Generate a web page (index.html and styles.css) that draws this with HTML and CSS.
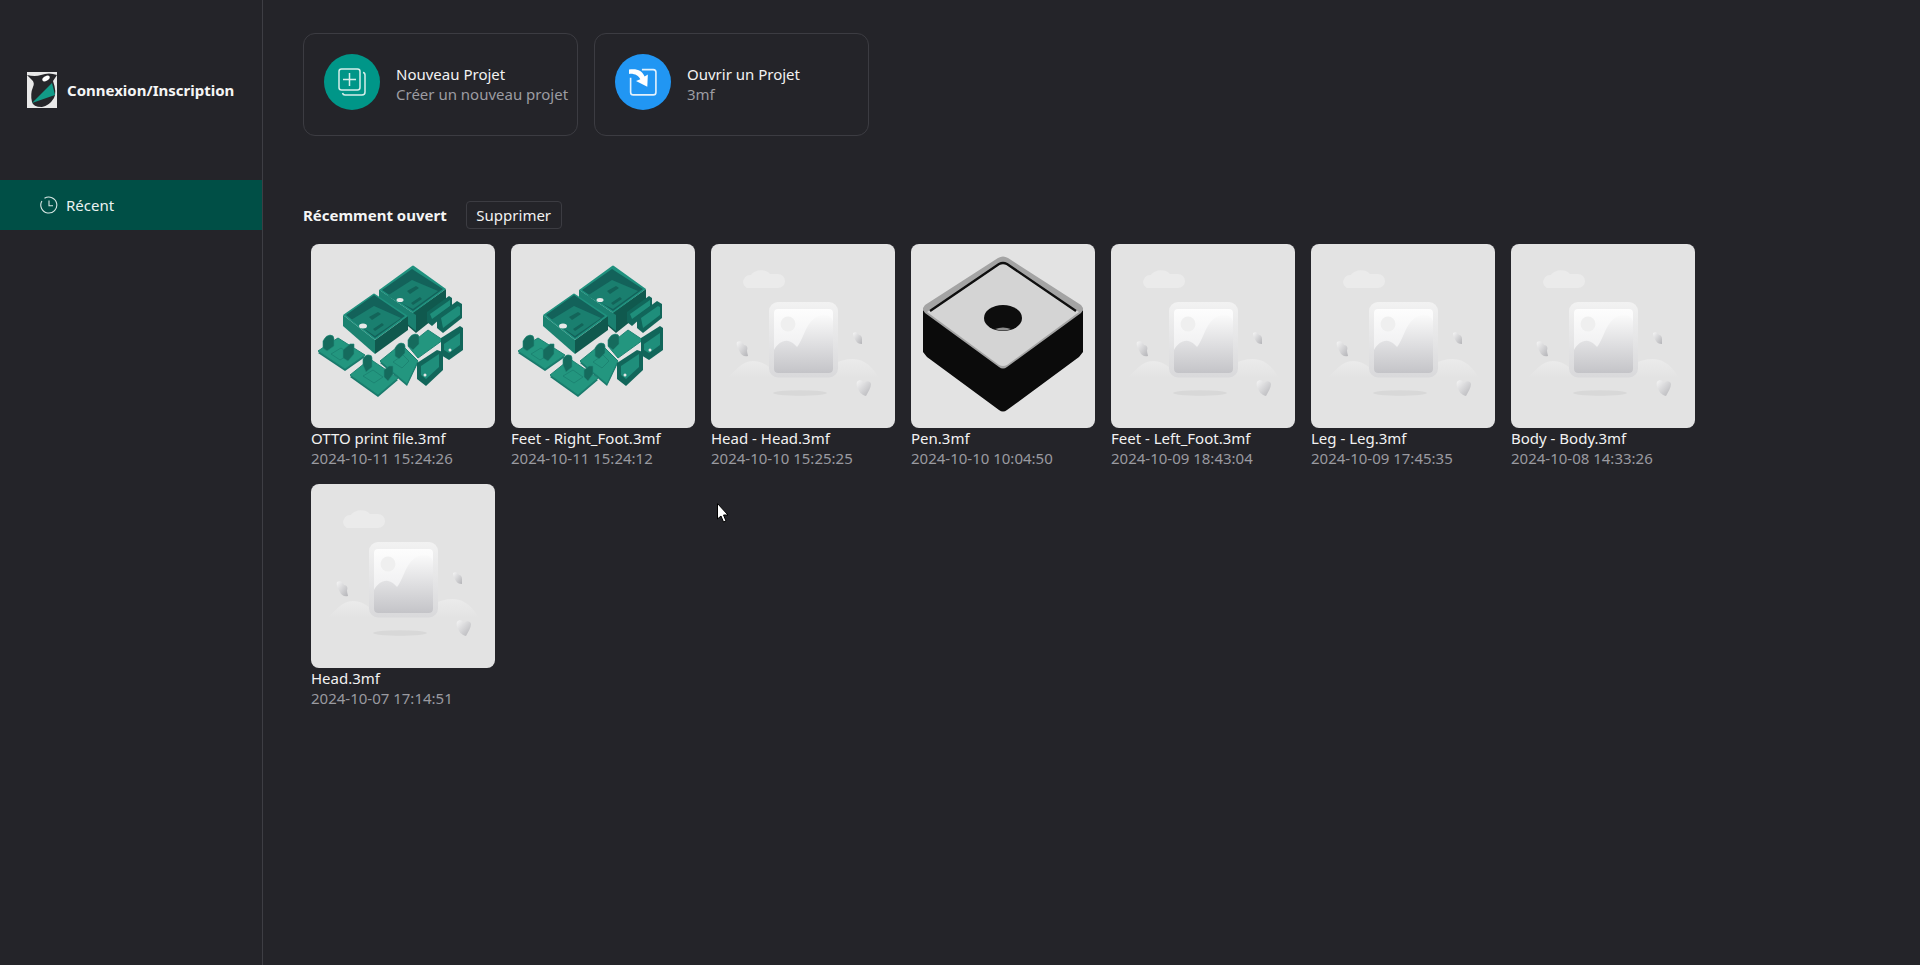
FILE: index.html
```html
<!DOCTYPE html>
<html lang="fr">
<head>
<meta charset="UTF-8" />
<title>Accueil</title>
<link rel="stylesheet" href="styles.css">
</head>
<body>
<svg class="defs" width="0" height="0">
  <defs>
    <linearGradient id="frame-grad" x1="0" y1="0" x2="0" y2="1">
      <stop offset="0" stop-color="#f2f2f2"/>
      <stop offset="1" stop-color="#d9d9db"/>
    </linearGradient>
    <linearGradient id="photo-grad" x1="0" y1="0" x2="0" y2="1">
      <stop offset="0" stop-color="#fdfdfd"/>
      <stop offset="1" stop-color="#e8e8ea"/>
    </linearGradient>
    <linearGradient id="hill-grad" x1="0" y1="0" x2="0" y2="1">
      <stop offset="0" stop-color="#fafafa"/>
      <stop offset="1" stop-color="#c4c4c8"/>
    </linearGradient>
    <linearGradient id="ground-grad" x1="0" y1="0" x2="0" y2="1">
      <stop offset="0" stop-color="#ebebeb"/>
      <stop offset="1" stop-color="#e3e3e3"/>
    </linearGradient>
    <linearGradient id="leaf-grad" x1="0" y1="0" x2="1" y2="1">
      <stop offset="0" stop-color="#f6f6f6"/>
      <stop offset="1" stop-color="#b4b4b8"/>
    </linearGradient>

    <symbol id="placeholder" viewBox="0 0 184 184">
      <path fill="#ebebeb" d="M39 44a6 6 0 0 1-6-9 7 7 0 0 1 7-4c3-5 14-7 19-1h8a7 7 0 0 1 0 14z"/>
      <path fill="url(#ground-grad)" d="M16 134c8-6 14-17 26-17 8 0 14 4 21 10v7z"/>
      <path fill="url(#ground-grad)" d="M122 120c6-3 12-5 20-5 12 0 20 9 26 19h-46z"/>
      <rect x="58" y="58" width="69" height="75.500" rx="9" fill="url(#frame-grad)"/>
      <rect x="63" y="65" width="59" height="64" rx="4" fill="url(#photo-grad)"/>
      <circle cx="77" cy="80" r="7.500" fill="#efefef"/>
      <path fill="url(#hill-grad)" d="M63 106c3-6 9-10 14-9 5 1 8 5 9 6 8-9 9-31 27-32 5 0 8 3 9 6v48a4 4 0 0 1-4 4H67a4 4 0 0 1-4-4z"/>
      <ellipse cx="89" cy="149" rx="27" ry="2.800" fill="#d8d8d8"/>
      <path fill="url(#leaf-grad)" d="M26 98c3-2 6 0 7 3 3 0 4 3 3 5 0 3 1 5 1 6-4 1-7-1-8-4-2-3-4-7-3-10z"/>
      <path fill="url(#leaf-grad)" d="M142 89c3-2 5 0 6 2 2 0 3 2 3 4l0 5c-3 0-5-1-6-3-2-3-3-6-3-8z"/>
      <path fill="url(#leaf-grad)" d="M146 138c2-3 6-2 7 1 2-3 7-2 7 1 0 4-3 8-5 12-5-1-7-5-8-7-1-2-2-5-1-7z"/>
    </symbol>

    <symbol id="model-otto" viewBox="0 0 184 184">
      <!-- flat foot plates, with a little thickness -->
      <g fill="#18776a" transform="translate(0 2)">
        <path d="M7 107l12-8 8-5 27 17-20 14z"/>
        <path d="M39 131l20-16 28 19-20 17z"/>
        <path d="M69 117l21-17 17 17-11 23z"/>
      </g>
      <g fill="#23967f" stroke="#1b8472" stroke-width="1" stroke-linejoin="round">
        <path d="M7 107l12-8 8-5 27 17-20 14z"/>
        <path d="M39 131l20-16 28 19-20 17z"/>
        <path d="M69 117l21-17 17 17-11 23z"/>
        <path d="M97 102l20-16 15 10-25 18z"/>
      </g>
      <g fill="none" stroke="#1a7f6f" stroke-width=".8">
        <path d="M20 110l10-6 9 6-10 6z"/>
        <path d="M52 132l10-6 10 7-9 6z"/>
        <path d="M82 118l10-7 6 6-7 7z"/>
      </g>
      <!-- upright tabs on the plates -->
      <g fill="#156b5d" stroke="#1f8b79" stroke-width=".6" stroke-linejoin="round">
        <path d="M12 104v-7q3-6 7-6t4 4v7l-7 5z"/>
        <path d="M32 114v-8l7-6h4v10l-6 7z"/>
        <path d="M52 121v-6q3-5 6-4 3 0 3 3v9l-6 5z"/>
        <path d="M73 133v-7l5-4h4v8l-5 7z"/>
        <path d="M84 112v-8q3-5 6-5 4 0 4 3v7l-6 6z"/>
        <path d="M97 102v-6q3-6 7-6 4 0 4 3v7l-6 6z"/>
      </g>
      <!-- back box -->
      <path fill="#10594e" d="M68 46v11l37 32 30-24V45l-34 24z"/>
      <path fill="#1a8070" d="M68 46v11l37 30V71z"/>
      <path fill="#1f917e" d="M68 46l33-24q1-1 2 0l32 23-33 24z"/>
      <path fill="#13625a" d="M71 46l30-21 31 20-30 22z"/>
      <path fill="#1a7f6f" d="M76 52l25-16 26 11-25 18z"/>
      <path fill="#136459" d="M96 47l9-5 3 2-9 6zM100 59l9-6 2 2-9 6z"/>
      <ellipse cx="89" cy="56" rx="3.500" ry="2" fill="#e8e8e8"/>
      <!-- front box -->
      <path fill="#10594e" d="M64 96v14l33-24V72z"/>
      <path fill="#1b8270" d="M32 71v11l32 28V96z"/>
      <path fill="#1f917e" d="M32 71l30-21q1-1 2 0l33 22-33 24z"/>
      <path fill="#13625a" d="M35 71l28-20 31 21-30 22z"/>
      <path fill="#1a7f6f" d="M40 76l23-14 27 12-26 18z"/>
      <path fill="#136459" d="M58 73l9-5 3 2-9 6zM62 85l9-6 2 2-9 6z"/>
      <ellipse cx="52" cy="82" rx="4" ry="2.500" fill="#e8e8e8"/>
      <!-- channel brackets, upper right -->
      <path fill="#11665a" d="M116 68l22-16 3 2v10l-20 18-5-4z"/>
      <path fill="#1f8e7b" d="M119 70l20-14v6l-18 13z"/>
      <path fill="#11665a" d="M126 72l20-15 5 3v14l-19 15-6-5z"/>
      <path fill="#1f8e7b" d="M130 74l17-12 2 1v8l-17 13z"/>
      <!-- channel brackets, lower right -->
      <path fill="#11665a" d="M130 94l19-12 3 2v22l-14 10-8-5z"/>
      <path fill="#1f8e7b" d="M133 100l16-11v12l-11 8-5-3z"/>
      <path fill="#11665a" d="M106 119l20-13 6 2v18l-17 16-9-7z"/>
      <path fill="#1f8e7b" d="M110 122l18-12v13l-13 12-5-4z"/>
      <circle cx="114" cy="131" r="1.500" fill="#e8e8e8"/>
      <circle cx="139" cy="106" r="1.500" fill="#e8e8e8"/>
    </symbol>

    <symbol id="model-pen" viewBox="0 0 184 184">
      <path fill="#0b0b0b" d="M12 66v42l4 5 72 53q4 3 8 0l72-53 4-5V66L92 124z"/>
      <path fill="#a4a4a4" d="M12 66v-2l2-3L87 14q5-3 10 0l73 47 2 3v2l-2 3-74 54q-4 3-8 0L14 69z"/>
      <path fill="#d4d4d4" d="M16 68L88 20q4-2 8 0l72 48-72 53q-4 2-8 0z"/>
      <path fill="none" stroke="#0f0f0f" stroke-width="2.400" d="M19 67L88 20q4-2 8 0l69 47"/>
      <ellipse cx="92" cy="74" rx="19" ry="13" fill="#0d0d0d"/>
      <path fill="#8f8f8f" d="M84 85q8-3 16 0-8 3-16 0z"/>
    </symbol>
  </defs>
</svg>

<aside class="sidebar">
  <div class="account">
    <svg class="logo" viewBox="0 0 30 36">
      <rect width="30" height="36" fill="#e9e9e9"/>
      <path fill="#26262a" d="M0 3q8 2 14 0 8-3 16 0l-4 6q4 11 1 17-5 8-12 9-9 0-10-5-2-8 1-15 2-4-1-7z"/>
      <path fill="#129b88" d="M5 31l20-20 3 12z"/>
      <ellipse cx="19" cy="6.500" rx="4" ry="2.300" transform="rotate(-30 19 6.500)" fill="#fff"/>
    </svg>
    <span class="account-name">Connexion/Inscription</span>
  </div>
  <div class="nav-item">
    <svg class="nav-icon" viewBox="0 0 18 18" fill="none" stroke="#d9e8e5" stroke-width="1.100">
      <path d="M4.500 2.300a8 8 0 1 1-2.600 2.700M9 4.500V9.800h4"/>
    </svg>
    Récent
  </div>
</aside>

<main class="content">
  <div class="actions">
    <div class="action">
      <span class="action-icon green">
        <svg viewBox="0 0 28 28" fill="none" stroke="#d5eeea" stroke-width="1.500">
          <rect x="1" y="1" width="21" height="21" rx="2.500"/>
          <path d="M11.500 5v13M5 11.500h13"/>
          <path d="M25 4.500q2 .3 2 2.500v17q0 3-3 3H7q-2 0-2.500-2"/>
        </svg>
      </span>
      <span class="action-text">
        <span class="action-title">Nouveau Projet</span>
        <span class="action-sub">Créer un nouveau projet</span>
      </span>
    </div>
    <div class="action">
      <span class="action-icon blue">
        <svg viewBox="0 0 26 26" fill="none" stroke="#e3f1fc" stroke-width="1.500">
          <path d="M12 1.500h10.500q2.500 0 2.500 2.500v18.500q0 2.500-2.500 2.500H4q-2.500 0-2.500-2.500V9"/>
          <path fill="#fff" stroke="none" d="M0 1.500c8-1 12 1 14.500 6.500l3-2-.5 11.500L6.500 12l4-1.500C9 7 5 5 0 5.500z"/>
        </svg>
      </span>
      <span class="action-text">
        <span class="action-title">Ouvrir un Projet</span>
        <span class="action-sub">3mf</span>
      </span>
    </div>
  </div>

  <div class="recent-head">
    <span class="recent-title">Récemment ouvert</span>
    <button class="delete-btn">Supprimer</button>
  </div>

  <div class="recent-grid">
    <div class="file">
      <svg class="thumb"><use href="#model-otto"/></svg>
      <div class="file-name">OTTO print file.3mf</div>
      <div class="file-date">2024-10-11 15:24:26</div>
    </div>
    <div class="file">
      <svg class="thumb"><use href="#model-otto"/></svg>
      <div class="file-name">Feet - Right_Foot.3mf</div>
      <div class="file-date">2024-10-11 15:24:12</div>
    </div>
    <div class="file">
      <svg class="thumb"><use href="#placeholder"/></svg>
      <div class="file-name">Head - Head.3mf</div>
      <div class="file-date">2024-10-10 15:25:25</div>
    </div>
    <div class="file">
      <svg class="thumb"><use href="#model-pen"/></svg>
      <div class="file-name">Pen.3mf</div>
      <div class="file-date">2024-10-10 10:04:50</div>
    </div>
    <div class="file">
      <svg class="thumb"><use href="#placeholder"/></svg>
      <div class="file-name">Feet - Left_Foot.3mf</div>
      <div class="file-date">2024-10-09 18:43:04</div>
    </div>
    <div class="file">
      <svg class="thumb"><use href="#placeholder"/></svg>
      <div class="file-name">Leg - Leg.3mf</div>
      <div class="file-date">2024-10-09 17:45:35</div>
    </div>
    <div class="file">
      <svg class="thumb"><use href="#placeholder"/></svg>
      <div class="file-name">Body - Body.3mf</div>
      <div class="file-date">2024-10-08 14:33:26</div>
    </div>
    <div class="file">
      <svg class="thumb"><use href="#placeholder"/></svg>
      <div class="file-name">Head.3mf</div>
      <div class="file-date">2024-10-07 17:14:51</div>
    </div>
  </div>
</main>

<!-- mouse pointer caught in the screenshot -->
<svg class="pointer" viewBox="0 0 12 20">
  <path fill="#fff" stroke="#000" stroke-width="1" d="M.5.500v15.500l3.500-3 2.500 6 2.500-1-2.500-6H11z"/>
</svg>
</body>
</html>
```

FILE: styles.css
```css
* {
  box-sizing: border-box;
}

html, body {
  height: 100%;
}

body {
  margin: 0;
  display: flex;
  background: #242429;
  color: #eee;
  font-family: "Noto Sans", "Open Sans", sans-serif;
  font-size: 15px;
  overflow: hidden;
}

.defs {
  position: absolute;
}

/* Sidebar */
.sidebar {
  width: 263px;
  flex-shrink: 0;
  border-right: 1px solid #3e3e44;
}

.account {
  display: flex;
  align-items: center;
  gap: 10px;
  height: 36px;
  margin: 72px 0 72px 27px;
}

.logo {
  width: 30px;
  height: 36px;
}

.account-name {
  font-weight: 700;
  color: #f5f5f5;
}

.nav-item {
  display: flex;
  align-items: center;
  gap: 8px;
  height: 50px;
  padding-left: 40px;
  background: #004f46;
  color: #eaf3f1;
}

.nav-icon {
  width: 18px;
  height: 18px;
}

/* Main area */
.content {
  flex: 1;
  padding: 33px 0 0 40px;
}

.actions {
  display: flex;
  gap: 16px;
}

.action {
  display: flex;
  align-items: center;
  gap: 16px;
  width: 275px;
  height: 103px;
  padding-left: 20px;
  border: 1px solid #3c3c42;
  border-radius: 12px;
}

.action-icon {
  width: 56px;
  height: 56px;
  margin-bottom: 5px;
  border-radius: 50%;
  display: flex;
  align-items: center;
  justify-content: center;
  flex-shrink: 0;
}

.action-icon svg {
  width: 28px;
  height: 28px;
}

.action-icon.green {
  background: #009688;
}

.action-icon.blue {
  background: #2196f3;
}

.action-text {
  display: flex;
  flex-direction: column;
  padding-bottom: 2px;
  line-height: 20px;
  white-space: nowrap;
}

.action-title {
  color: #f2f2f2;
}

.action-sub {
  color: #9c9ca2;
}

.recent-head {
  display: flex;
  align-items: center;
  gap: 19px;
  height: 28px;
  margin-top: 65px;
}

.recent-title {
  font-weight: 700;
  color: #f5f5f5;
}

.delete-btn {
  height: 28px;
  width: 96px;
  padding: 0;
  background: transparent;
  border: 1px solid #3c3c42;
  border-radius: 4px;
  color: #f2f2f2;
  font: inherit;
}

.recent-grid {
  display: grid;
  grid-template-columns: repeat(7, 184px);
  grid-auto-rows: 240px;
  gap: 0 16px;
  margin: 15px 0 0 8px;
}

.thumb {
  display: block;
  width: 184px;
  height: 184px;
  background: #e3e3e3;
  border-radius: 8px;
}

.file-name {
  line-height: 20px;
  color: #f2f2f2;
  white-space: nowrap;
}

.file-date {
  line-height: 20px;
  color: #9a9aa0;
}

.pointer {
  position: absolute;
  left: 717px;
  top: 503px;
  width: 12px;
  height: 20px;
}
```
